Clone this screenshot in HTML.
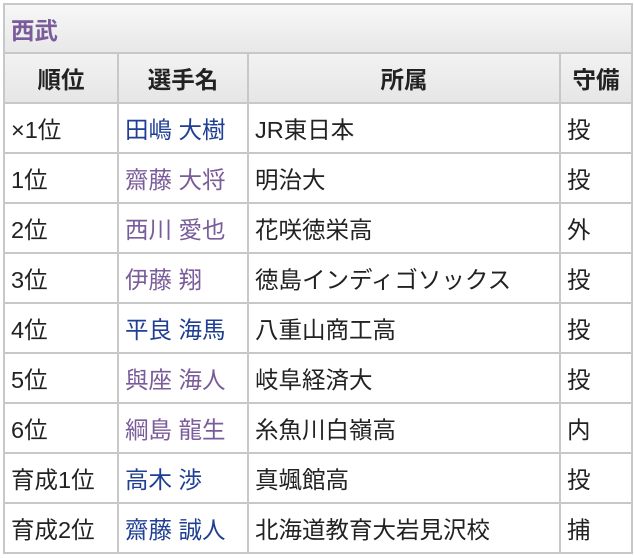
<!DOCTYPE html>
<html><head><meta charset="utf-8"><style>
html,body{margin:0;padding:0;background:#fff;width:634px;height:558px;overflow:hidden}
table{position:absolute;left:3px;top:3px;border-collapse:collapse;font-family:"Liberation Sans","Noto Sans CJK JP",sans-serif;font-size:23.5px;color:#222;table-layout:fixed;width:628px}
td,th{border:2px solid #c8c8c8;padding:0 0 0 6px;height:48px;white-space:nowrap;overflow:hidden}
th{background:linear-gradient(#f2f2f2,#e6e6e6);font-weight:bold;text-align:center;padding:0}
.t{text-align:left;padding-left:6px;color:#7a5c9a;background:linear-gradient(#f7f7f7,#e8e8e8);height:47px}
.b{color:#1f3f94}.v{color:#7a5c9a}
</style></head><body>
<table>
<colgroup><col style="width:114px"><col style="width:130px"><col style="width:312px"><col style="width:72px"></colgroup>
<tr><th colspan="4" class="t">西武</th></tr>
<tr><th>順位</th><th>選手名</th><th>所属</th><th>守備</th></tr>
<tr><td>×1位</td><td class="b">田嶋 大樹</td><td>JR東日本</td><td>投</td></tr>
<tr><td>1位</td><td class="v">齋藤 大将</td><td>明治大</td><td>投</td></tr>
<tr><td>2位</td><td class="v">西川 愛也</td><td>花咲徳栄高</td><td>外</td></tr>
<tr><td>3位</td><td class="v">伊藤 翔</td><td>徳島インディゴソックス</td><td>投</td></tr>
<tr><td>4位</td><td class="b">平良 海馬</td><td>八重山商工高</td><td>投</td></tr>
<tr><td>5位</td><td class="v">與座 海人</td><td>岐阜経済大</td><td>投</td></tr>
<tr><td>6位</td><td class="v">綱島 龍生</td><td>糸魚川白嶺高</td><td>内</td></tr>
<tr><td>育成1位</td><td class="b">高木 渉</td><td>真颯館高</td><td>投</td></tr>
<tr><td>育成2位</td><td class="b">齋藤 誠人</td><td>北海道教育大岩見沢校</td><td>捕</td></tr>
</table>
</body></html>
